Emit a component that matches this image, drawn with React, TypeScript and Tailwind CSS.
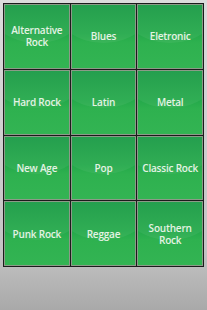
import React from 'react';

const GENRES: string[] = [
  'Alternative Rock',
  'Blues',
  'Eletronic',
  'Hard Rock',
  'Latin',
  'Metal',
  'New Age',
  'Pop',
  'Classic Rock',
  'Punk Rock',
  'Reggae',
  'Southern Rock',
];

const App: React.FC = () => {
  return (
    <div className="w-[207px] h-[310px] bg-[linear-gradient(to_bottom,#dcdcdc_0%,#c4c4c4_80%,#a9a9a9_100%)] pt-[3px] px-[3px] font-['Open_Sans',sans-serif]">
      <div className="grid grid-cols-3 grid-rows-4 gap-px p-px bg-[#1b1b1b] h-[264px]">
        {GENRES.map(g => (
          <button
            key={g}
            className="relative overflow-hidden border border-[#8c9a88] bg-[linear-gradient(to_bottom,#179a43_0%,#23a84a_45%,#2eb14f_60%,#33b453_100%)] flex items-center justify-center px-[2px]"
          >
            <span className="absolute left-[-30%] right-[-30%] top-[-70%] h-[130%] rounded-[50%] bg-[#ffffff]/[0.06]" />
            <span className="relative text-[10px] leading-[12px] font-semibold tracking-[-0.2px] text-[#e4f3e4] text-center">
              {g}
            </span>
          </button>
        ))}
      </div>
    </div>
  );
};

export default App;
